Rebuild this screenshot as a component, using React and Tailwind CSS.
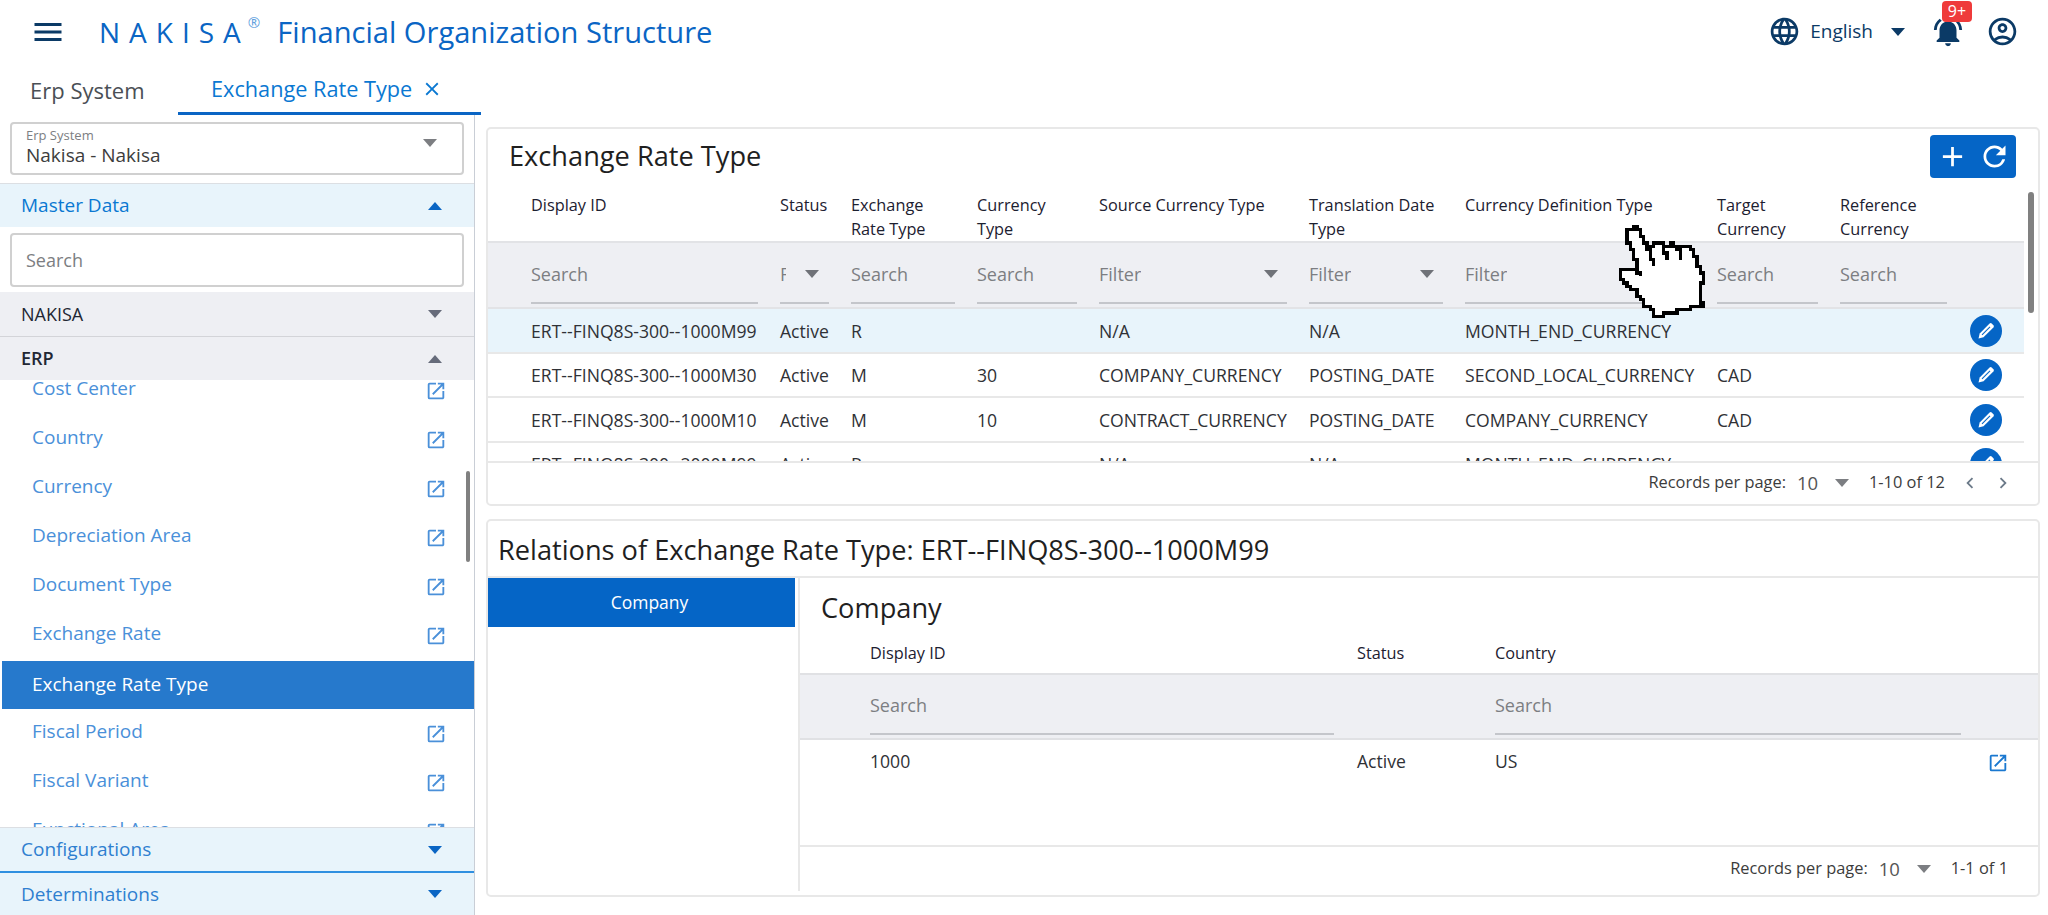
import React from "react";
import {
  MdMenu, MdLanguage, MdNotificationsActive, MdOutlineAccountCircle, MdOutlineOpenInNew,
  MdAdd, MdRefresh, MdClose, MdChevronLeft, MdChevronRight,
} from "react-icons/md";

const Caret = ({ up, className = "" }) => (
  <svg width="14" height="8" viewBox="0 0 14 8" className={className}>
    <path d={up ? "M0 8 L7 0 L14 8 Z" : "M0 0 L7 8 L14 0 Z"} fill="currentColor" />
  </svg>
);

const Pencil = () => (
  <svg width="24" height="24" viewBox="0 0 24 24">
    <path d="M4.5 19.5l1.2-5L15.6 4.6a1.5 1.5 0 0 1 2.1 0l1.7 1.7a1.5 1.5 0 0 1 0 2.1L9.5 18.3Z" fill="#fff" />
    <path d="M8 15.8L16 7.8" stroke="#0565c6" strokeWidth="1.1" />
  </svg>
);

// Turns a polyline into a staircase on a coarse grid, so the cursor reads as pixel art.
const stair = (pts, step, close) => {
  const snap = (v) => Math.round(v / step) * step;
  const out = [];
  const list = close ? [...pts, pts[0]] : pts;
  list.forEach((p, i) => {
    if (i === 0) { out.push([snap(p[0]), snap(p[1])]); return; }
    const a = list[i - 1];
    const n = Math.max(1, Math.ceil(Math.hypot(p[0] - a[0], p[1] - a[1]) / step));
    for (let k = 1; k <= n; k++) {
      const x = snap(a[0] + ((p[0] - a[0]) * k) / n);
      const y = snap(a[1] + ((p[1] - a[1]) * k) / n);
      const [lx, ly] = out[out.length - 1];
      if (x !== lx && y !== ly) out.push([x, ly]);
      if (x !== lx || y !== ly) out.push([x, y]);
    }
  });
  return "M" + out.map((q) => q.join(" ")).join("L") + (close ? "Z" : "");
};

const hand = [[106, 62], [136, 48], [168, 108], [212, 100], [218, 108], [245, 100], [258, 110], [285, 105], [305, 122], [338, 200], [330, 250], [335, 285], [205, 322], [170, 285], [130, 235], [95, 210], [85, 185], [120, 178], [150, 195]];

const items = ["Cost Center", "Country", "Currency", "Depreciation Area", "Document Type", "Exchange Rate", "Exchange Rate Type", "Fiscal Period", "Fiscal Variant", "Functional Area"];

const cols = "grid grid-cols-[227px_49px_104px_100px_188px_134px_230px_101px_107px_1fr] gap-x-[22px] pl-[43px]";

const heads = ["Display ID", "Status", ["Exchange", "Rate Type"], ["Currency", "Type"], "Source Currency Type", ["Translation Date", "Type"], "Currency Definition Type", ["Target", "Currency"], ["Reference", "Currency"]];

const filters = [
  { t: "Search" }, { t: "Filter", caret: true, narrow: true }, { t: "Search" }, { t: "Search" },
  { t: "Filter", caret: true }, { t: "Filter", caret: true }, { t: "Filter" }, { t: "Search" }, { t: "Search" },
];

const rows = [
  ["ERT--FINQ8S-300--1000M99", "Active", "R", "", "N/A", "N/A", "MONTH_END_CURRENCY", "", ""],
  ["ERT--FINQ8S-300--1000M30", "Active", "M", "30", "COMPANY_CURRENCY", "POSTING_DATE", "SECOND_LOCAL_CURRENCY", "CAD", ""],
  ["ERT--FINQ8S-300--1000M10", "Active", "M", "10", "CONTRACT_CURRENCY", "POSTING_DATE", "COMPANY_CURRENCY", "CAD", ""],
  ["ERT--FINQ8S-300--2000M99", "Active", "R", "", "N/A", "N/A", "MONTH_END_CURRENCY", "", ""],
];

function FilterBox({ t, caret, narrow }) {
  return (
    <div className="h-[2px] mt-0 relative">
      <div className="absolute left-0 right-0 bottom-0 h-[2px] bg-[#c4c6cb]" />
      <div className="absolute left-0 right-0 bottom-[18px] flex items-center justify-between h-[24px]">
        <span className={`text-[18px] text-[#7c7e82] overflow-hidden whitespace-nowrap ${narrow ? "w-[6px]" : ""}`}>{t}</span>
        {caret && <Caret className={`text-[#6f7278] ${narrow ? "mr-[10px]" : "mr-[9px]"}`} />}
      </div>
    </div>
  );
}

function Footer({ range, nav, pr, className }) {
  return (
    <div className={`flex items-center justify-end text-[#3c3c3c] ${pr} ${className}`}>
      <span className="text-[16.4px]">Records per page:</span>
      <span className="text-[18.5px] ml-[11px] w-[21px] text-[#555]">10</span>
      <Caret className="ml-[17px] text-[#7c7e82]" />
      <span className="text-[16.4px] ml-[20px]">{range}</span>
      {nav && (
        <span className="flex items-center ml-[14px] text-[#6c7a89]">
          <MdChevronLeft size={22} />
          <MdChevronRight size={22} className="ml-[11px]" />
        </span>
      )}
    </div>
  );
}

export default function App() {
  return (
    <div className="w-[2048px] h-[915px] overflow-hidden bg-white font-['Open_Sans',sans-serif] flex flex-col relative">
      {/* Header */}
      <header className="h-[66px] flex items-center shrink-0 pb-[2px]">
        <MdMenu size={36} className="ml-[30px] text-[#0b3a66]" />
        <div className="ml-[33px] flex items-start text-[#0a65c4]">
          <span className="text-[28px] font-medium tracking-[9px] leading-[36px]">NAKISA</span>
          <span className="text-[15px] leading-[16px] -ml-[2px] text-[#5f9fde]">®</span>
        </div>
        <span className="ml-[17px] text-[29.1px] text-[#0a65c4] leading-[36px]">Financial Organization Structure</span>
        <div className="ml-auto flex items-center pb-[1px]">
          <MdLanguage size={33} className="text-[#0b3a66]" />
          <span className="ml-[9px] text-[19px] text-[#0b3a66]">English</span>
          <Caret className="ml-[18px] text-[#0b3a66]" />
          <div className="relative ml-[29px] w-[28px]">
            <MdNotificationsActive size={34} className="text-[#0b3a66] -ml-[3px]" />
            <span className="absolute -top-[14px] -right-[10px] w-[30px] h-[21px] rounded-[4px] bg-[#ef3b3b] text-white text-[16px] leading-[21px] text-center">9+</span>
          </div>
          <MdOutlineAccountCircle size={33} className="ml-[24px] mr-[29px] text-[#0b3a66]" />
        </div>
      </header>

      {/* Tabs */}
      <nav className="h-[49px] flex shrink-0">
        <div className="w-[178px] pl-[30px] flex items-center text-[22px] text-[#4a4f55]">Erp System</div>
        <div className="w-[303px] border-b-[3px] border-[#0a65c4] flex items-center pl-[33px] text-[21.7px] text-[#0a78d2]">
          Exchange Rate Type
          <MdClose size={22} className="ml-[9px]" />
        </div>
      </nav>

      <main className="flex-1 flex min-h-0">
        {/* Sidebar */}
        <aside className="w-[475px] shrink-0 border-r border-[#c9ced6] flex flex-col">
          <div className="mx-[10px] mt-[7px] h-[53px] border-2 border-[#d0d0d0] rounded-[4px] relative pl-[14px] pt-[3px] shrink-0">
            <div className="text-[13px] leading-[16px] text-[#7c7e82]">Erp System</div>
            <div className="text-[19px] leading-[24px] text-[#3c3c3c]">Nakisa - Nakisa</div>
            <Caret className="absolute right-[25px] top-[15px] text-[#7c7e82]" />
          </div>
          <div className="mt-[8px] h-[44px] border-t border-[#dcdfe3] bg-[#e8f4fb] flex items-center justify-between pl-[21px] pr-[32px] text-[19px] text-[#0a78d2] shrink-0">
            Master Data <Caret up className="text-[#0a65c4]" />
          </div>
          <div className="mx-[10px] mt-[6px] h-[54px] border-2 border-[#d0d0d0] rounded-[4px] flex items-center pl-[14px] text-[18px] text-[#7c7e82] shrink-0">Search</div>
          <div className="mt-[5px] h-[45px] bg-[#eeeff3] border-b border-[#d3d4d8] flex items-center justify-between pl-[21px] pr-[32px] text-[18px] text-[#222733] shrink-0">
            NAKISA <Caret className="text-[#666b7a]" />
          </div>
          <div className="h-[43px] bg-[#eeeff3] flex items-center justify-between pl-[21px] pr-[32px] text-[18px] font-semibold text-[#222733] shrink-0">
            ERP <Caret up className="text-[#666b7a]" />
          </div>
          <div className="flex-1 min-h-0 overflow-hidden relative">
            <div className="-mt-[13px] pl-[2px]">
              {items.map((it) => {
                const sel = it === "Exchange Rate Type";
                return (
                  <div key={it} className={`h-[48px] mb-[1px] flex items-center justify-between pl-[30px] pr-[27px] text-[19px] ${sel ? "bg-[#2679cc] text-white font-medium" : "text-[#4a90d9]"}`}>
                    <span className={sel ? "pb-[2px]" : "pb-[6px]"}>{it}</span>
                    {!sel && <MdOutlineOpenInNew size={22} className="text-[#4a90d9]" />}
                  </div>
                );
              })}
            </div>
            <div className="absolute left-[466px] top-[91px] w-[4px] h-[91px] rounded-full bg-[#808080]" />
          </div>
          <div className="h-[44px] bg-[#e8f4fb] border-t border-[#dcdfe3] flex items-center justify-between pl-[21px] pr-[32px] text-[19px] text-[#2f7fd0] shrink-0">
            Configurations <Caret className="text-[#0a65c4]" />
          </div>
          <div className="h-[44px] bg-[#e8f4fb] border-t-2 border-[#2f8fe0] flex items-center justify-between pl-[21px] pr-[32px] text-[19px] text-[#2f7fd0] shrink-0">
            Determinations <Caret className="text-[#0a65c4]" />
          </div>
        </aside>

        {/* Right side */}
        <section className="flex-1 min-w-0 pl-[11px] pr-[8px] pt-[12px] pb-[18px] flex flex-col gap-[13px]">
          {/* Top panel */}
          <div className="h-[379px] border-2 border-[#e8e8e8] rounded-[5px] flex flex-col relative overflow-hidden shrink-0">
            <div className="h-[49px] flex items-start justify-between shrink-0">
              <h2 className="text-[27.2px] leading-[34px] mt-[10px] pl-[21px] text-[#1f1f1f]">Exchange Rate Type</h2>
              <div className="mt-[6px] mr-[22px] w-[86px] h-[43px] rounded-[4px] bg-[#0565c6] flex items-center justify-center gap-[9px] text-white">
                <MdAdd size={33} />
                <MdRefresh size={33} />
              </div>
            </div>
            <div className={`${cols} w-[1536px] h-[63px] pt-[15px] text-[16.3px] leading-[24px] text-[#1c2030] shrink-0`}>
              {heads.map((h, i) => (
                <div key={i} className="whitespace-nowrap">{Array.isArray(h) ? h.map((l) => <div key={l}>{l}</div>) : h}</div>
              ))}
            </div>
            <div className={`${cols} w-[1536px] h-[68px] bg-[#eeeff3] border-t-2 border-b-2 border-[#e2e3e6] items-end pb-[3px] shrink-0`}>
              {filters.map((f, i) => <FilterBox key={i} {...f} />)}
            </div>
            <div className="w-[1536px] h-[152px] overflow-hidden shrink-0">
              {rows.map((r, i) => (
                <div key={i} className={`${cols} h-[44.5px] pt-[1px] items-center border-b-2 border-[#e8e8e8] text-[17.6px] text-[#2f3136] ${i === 0 ? "bg-[#e8f4fb] border-[#d9e3ea]" : ""}`}>
                  {r.map((c, j) => <div key={j} className="whitespace-nowrap">{c}</div>)}
                  <div className="flex justify-end pr-[22px]">
                    <span className="w-[32px] h-[32px] rounded-full bg-[#0565c6] flex items-center justify-center">
                      <Pencil />
                    </span>
                  </div>
                </div>
              ))}
            </div>
            <Footer range="1-10 of 12" nav pr="pr-[24px]" className="flex-1 border-t-2 border-[#e8e8e8] pb-[2px]" />
            <div className="absolute left-[1540px] top-[63px] w-[6px] h-[121px] rounded-full bg-[#808080]" />
          </div>

          {/* Bottom panel */}
          <div className="flex-1 min-h-0 border-2 border-[#e8e8e8] rounded-[5px] flex flex-col overflow-hidden">
            <div className="h-[57px] flex items-center pl-[10px] pt-[4px] border-b-2 border-[#e8e8e8] text-[27.2px] text-[#1f1f1f] shrink-0">
              Relations of Exchange Rate Type: ERT--FINQ8S-300--1000M99
            </div>
            <div className="flex-1 flex min-h-0">
              <div className="w-[312px] shrink-0 border-r-2 border-[#e8e8e8] mb-[4px]">
                <div className="w-[307px] h-[49px] bg-[#0565c6] text-white text-[17.5px] flex items-center justify-center pl-[16px] pb-[1px]">Company</div>
              </div>
              <div className="flex-1 min-w-0 flex flex-col">
                <h3 className="h-[60px] flex items-center pl-[21px] text-[27.2px] text-[#1f1f1f] shrink-0">Company</h3>
                <div className="h-[35px] grid grid-cols-[487px_138px_1fr] pl-[70px] pt-[3px] text-[16.3px] leading-[24px] text-[#1c2030] shrink-0">
                  <div>Display ID</div><div>Status</div><div>Country</div>
                </div>
                <div className="h-[67px] bg-[#eeeff3] border-t-2 border-b-2 border-[#e0e1e4] grid grid-cols-[464px_161px_466px] items-end pl-[70px] pb-[3px] shrink-0">
                  <FilterBox t="Search" />
                  <div />
                  <FilterBox t="Search" />
                </div>
                <div className="h-[105px] grid grid-cols-[487px_138px_1fr_auto] pl-[70px] pr-[29px] pt-[8px] text-[17.6px] text-[#2f3136] shrink-0">
                  <div>1000</div><div>Active</div><div>US</div>
                  <MdOutlineOpenInNew size={22} className="text-[#1a78d0] mt-[4px]" />
                </div>
                <Footer range="1-1 of 1" pr="pr-[30px]" className="flex-1 border-t-2 border-[#e8e8e8] pb-[5px]" />
              </div>
            </div>
          </div>
        </section>
      </main>

      {/* Pixel cursor over the table */}
      <svg className="absolute left-[1617px] top-[223px] pointer-events-none" width="92" height="98" viewBox="80 40 276 294" shapeRendering="crispEdges">
        <path d={stair(hand, 10, true)} fill="#fff" stroke="#000" strokeWidth="10" strokeLinejoin="miter" />
        <path d={stair([[168, 108], [188, 165]], 10) + stair([[215, 105], [230, 150]], 10) + stair([[255, 108], [272, 150]], 10)} fill="none" stroke="#000" strokeWidth="10" />
      </svg>
    </div>
  );
}
